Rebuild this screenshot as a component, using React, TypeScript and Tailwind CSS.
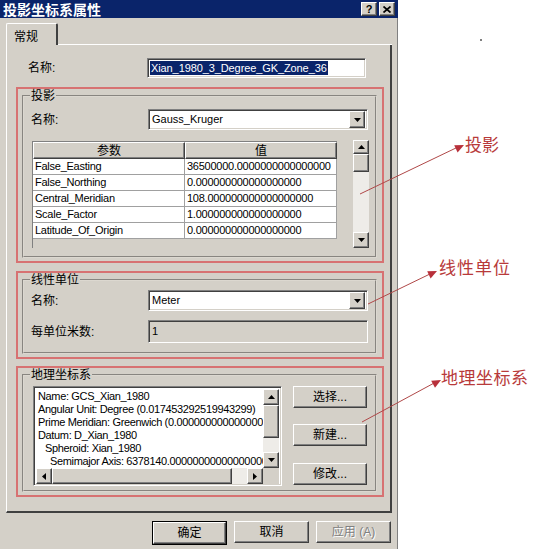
import React from 'react';

const raised =
  'bg-[#d4d0c8] border border-t-white border-l-white border-r-[#404040] border-b-[#404040] shadow-[inset_-1px_-1px_0_#808080]';
const sunken =
  'border border-t-[#808080] border-l-[#808080] border-r-white border-b-white shadow-[inset_1px_1px_0_#404040,inset_-1px_-1px_0_#d4d0c8]';

const Tri = ({ dir }: { dir: 'up' | 'down' | 'left' | 'right' }) => {
  if (dir === 'up' || dir === 'down') {
    return (
      <svg width="7" height="4" viewBox="0 0 7 4">
        <polygon points={dir === 'up' ? '0,4 7,4 3.5,0' : '0,0 7,0 3.5,4'} fill="#000" />
      </svg>
    );
  }
  return (
    <svg width="4" height="7" viewBox="0 0 4 7">
      <polygon points={dir === 'left' ? '4,0 4,7 0,3.5' : '0,0 0,7 4,3.5'} fill="#000" />
    </svg>
  );
};

const ArrowBtn = ({ dir, className }: { dir: 'up' | 'down' | 'left' | 'right'; className: string }) => (
  <div className={`${raised} ${className} flex items-center justify-center shrink-0`}>
    <Tri dir={dir} />
  </div>
);

const Combo = ({ value }: { value: string }) => (
  <div className={`${sunken} bg-white flex items-center w-[220px] h-[21px] pl-[3px] pr-[2px]`}>
    <span className="flex-1 text-[11px]">{value}</span>
    <ArrowBtn dir="down" className="w-[16px] h-[17px]" />
  </div>
);

const Button = ({ label, className = '' }: { label: string; className?: string }) => (
  <div className={`${raised} h-[22px] flex items-center justify-center ${className}`}>{label}</div>
);

const params = [
  ['False_Easting', '36500000.0000000000000000'],
  ['False_Northing', '0.000000000000000000'],
  ['Central_Meridian', '108.000000000000000000'],
  ['Scale_Factor', '1.000000000000000000'],
  ['Latitude_Of_Origin', '0.000000000000000000'],
];

// the list is wider than its box in the original, so the long lines stay clipped
const geoLines: [string, string][] = [
  ['Name: GCS_Xian_1980', 'pl-[2px]'],
  ['Angular Unit: Degree (0.017453292519943299)', 'pl-[2px]'],
  ['Prime Meridian: Greenwich (0.000000000000000000)', 'pl-[2px]'],
  ['Datum: D_Xian_1980', 'pl-[2px]'],
  ['Spheroid: Xian_1980', 'pl-[9px]'],
  ['Semimajor Axis: 6378140.000000000000000000', 'pl-[14px]'],
];

const groupBox =
  'mx-[4px] w-[355px] [border-style:groove] border-2 border-[#dcd8d0] px-[6px]';

export default function App() {
  return (
    <div className="relative flex w-[544px] h-[549px] bg-white text-black text-[12px] font-['Liberation_Sans','Noto_Sans_CJK_SC',sans-serif]">
      {/* dialog */}
      <div className="w-[398px] h-[549px] bg-[#d4d0c8] flex flex-col shadow-[inset_-1px_0_0_#808080]">
        <div className="h-[18px] bg-[#0a246a] flex items-center justify-between pl-[3px] pr-[3px]">
          <span className="text-white font-bold text-[14px] leading-none font-['Noto_Sans_CJK_SC',sans-serif]">
            投影坐标系属性
          </span>
          <div className="flex gap-[2px]">
            <div className={`${raised} w-[16px] h-[14px] flex items-center justify-center text-[11px] font-bold leading-none`}>?</div>
            <div className={`${raised} w-[16px] h-[14px] flex items-center justify-center`}>
              <svg width="8" height="7" viewBox="0 0 8 7">
                <path d="M0.5 0.5 L7.5 6.5 M7.5 0.5 L0.5 6.5" stroke="#000" strokeWidth="1.7" />
              </svg>
            </div>
          </div>
        </div>

        {/* tab strip */}
        <div className="flex mt-[5px] ml-[6px] w-[386px]">
          <div className="w-[52px] h-[22px] border-t border-l border-white border-r-2 border-r-[#404040] rounded-t-[2px] pl-[7px] pt-[3px] font-['Noto_Sans_CJK_SC',sans-serif]">
            常规
          </div>
          <div className="flex-1 border-b border-white" />
        </div>

        {/* panel */}
        <div className="ml-[6px] w-[386px] h-[468px] border-l border-white border-r-2 border-r-[#404040] border-b-2 border-b-[#404040] flex flex-col">
          <div className="flex items-center mt-[13px] pl-[21px]">
            <span className="w-[119px]">名称:</span>
            <div className={`${sunken} bg-white w-[219px] h-[20px] flex items-center pl-[2px]`}>
              <span className="bg-[#0a246a] text-white text-[11px] leading-[14px] px-[1px] tracking-[-0.1px]">Xian_1980_3_Degree_GK_Zone_36</span>
            </div>
          </div>

          {/* projection */}
          <div className="mt-[9px] ml-[9px] w-[368px] h-[176px] border-2 border-[#d77272] pt-[1px]">
            <fieldset className={`${groupBox} h-[168px]`}>
              <legend className="leading-[12px] px-[1px]">投影</legend>
              <div className="flex items-center mt-[7px] pl-[1px]">
                <span className="w-[117px]">名称:</span>
                <Combo value="Gauss_Kruger" />
              </div>
              <div className="flex mt-[10px] pl-[2px]">
                <div className="w-[305px] h-[107px] mt-[1px] border-l border-t border-[#808080] bg-[#d4d0c8] flex flex-col">
                  <div className="flex h-[17px]">
                    <div className={`${raised} w-[152px] flex items-center justify-center`}>参数</div>
                    <div className={`${raised} w-[152px] flex items-center justify-center`}>值</div>
                  </div>
                  {params.map(([k, v]) => (
                    <div key={k} className="flex h-[16px] bg-white text-[11px] tracking-[-0.25px]">
                      <div className="w-[152px] border-r border-b border-[#a0a0a0] pl-[2px] leading-[15px]">{k}</div>
                      <div className="w-[152px] border-r border-b border-[#a0a0a0] pl-[2px] leading-[15px] overflow-hidden whitespace-nowrap">{v}</div>
                    </div>
                  ))}
                </div>
                <div className="ml-[16px] w-[16px] h-[108px] flex flex-col bg-[#eeece8]">
                  <ArrowBtn dir="up" className="w-[16px] h-[14px]" />
                  <div className={`${raised} w-[16px] h-[18px]`} />
                  <div className="flex-1" />
                  <ArrowBtn dir="down" className="w-[16px] h-[16px]" />
                </div>
              </div>
            </fieldset>
          </div>

          {/* linear unit */}
          <div className="mt-[8px] ml-[9px] w-[368px] h-[88px] border-2 border-[#d77272] pt-[1px]">
            <fieldset className={`${groupBox} h-[80px]`}>
              <legend className="leading-[12px] px-[1px]">线性单位</legend>
              <div className="flex items-center mt-[4px] pl-[1px]">
                <span className="w-[117px]">名称:</span>
                <Combo value="Meter" />
              </div>
              <div className="flex items-center mt-[9px] pl-[1px]">
                <span className="w-[117px]">每单位米数:</span>
                <div className={`${sunken} w-[220px] h-[23px] flex items-center pl-[3px] text-[11px]`}>1</div>
              </div>
            </fieldset>
          </div>

          {/* geographic */}
          <div className="mt-[7px] ml-[9px] w-[368px] h-[131px] border-2 border-[#d77272] pt-[1px]">
            <fieldset className={`${groupBox} h-[123px]`}>
              <legend className="leading-[12px] px-[1px]">地理坐标系</legend>
              <div className="flex mt-[5px] pl-[3px]">
                <div className={`${sunken} bg-white w-[249px] h-[100px] p-[2px] flex flex-col`}>
                  <div className="flex h-[80px]">
                    <div className="flex-1 overflow-hidden whitespace-nowrap text-[11px] leading-[13px] pt-[1px] tracking-[-0.35px]">
                      {geoLines.map(([t, pad]) => (
                        <div key={t} className={pad}>{t}</div>
                      ))}
                    </div>
                    <div className="w-[16px] flex flex-col bg-[#eeece8]">
                      <ArrowBtn dir="up" className="w-[16px] h-[16px]" />
                      <div className={`${raised} w-[16px] h-[33px]`} />
                      <div className="flex-1" />
                      <ArrowBtn dir="down" className="w-[16px] h-[16px]" />
                    </div>
                  </div>
                  <div className="flex h-[16px]">
                    <div className="flex flex-1 bg-[#eeece8]">
                      <ArrowBtn dir="left" className="w-[16px] h-[16px]" />
                      <div className={`${raised} w-[180px] h-[16px]`} />
                      <div className="flex-1" />
                      <ArrowBtn dir="right" className="w-[16px] h-[16px]" />
                    </div>
                    <div className="w-[16px] bg-[#d4d0c8]" />
                  </div>
                </div>
                <div className="ml-[11px] flex flex-col">
                  <Button label="选择..." className="w-[74px]" />
                  <Button label="新建..." className="w-[74px] mt-[16px]" />
                  <Button label="修改..." className="w-[74px] mt-[17px]" />
                </div>
              </div>
            </fieldset>
          </div>
        </div>

        {/* bottom buttons */}
        <div className="flex justify-end gap-[7px] mt-[8px] pr-[7px]">
          <div className="border border-black">
            <Button label="确定" className="w-[73px] h-[19px]" />
          </div>
          <Button label="取消" className="w-[75px] h-[21px]" />
          <Button label="应用 (A)" className="w-[75px] h-[21px] text-[#808080] [text-shadow:1px_1px_0_#fff]" />
        </div>
      </div>

      {/* annotations */}
      <svg className="absolute inset-0 pointer-events-none" width="544" height="549" viewBox="0 0 544 549">
        <g stroke="#b04848" strokeWidth="1">
          <line x1="360" y1="194" x2="458" y2="147" />
          <line x1="368" y1="304" x2="432" y2="273" />
          <line x1="362" y1="422" x2="436" y2="382" />
        </g>
        <g fill="#b8303a">
          <polygon points="464,145 457.6,152.5 454.2,145.3" />
          <polygon points="437,271 430.6,278.5 427.2,271.3" />
          <polygon points="441,380 435,387.8 431.2,380.8" />
        </g>
        <circle cx="481" cy="40" r="1" fill="#555" />
      </svg>
      <span className="absolute left-[465px] top-[135px] text-[17px] leading-none text-[#b83a3a] font-['Noto_Sans_CJK_SC',sans-serif]">投影</span>
      <span className="absolute left-[439px] top-[258px] text-[17px] leading-none tracking-[1px] text-[#b83a3a] font-['Noto_Sans_CJK_SC',sans-serif]">线性单位</span>
      <span className="absolute left-[441px] top-[368px] text-[17px] leading-none tracking-[0.5px] text-[#b83a3a] font-['Noto_Sans_CJK_SC',sans-serif]">地理坐标系</span>
    </div>
  );
}
